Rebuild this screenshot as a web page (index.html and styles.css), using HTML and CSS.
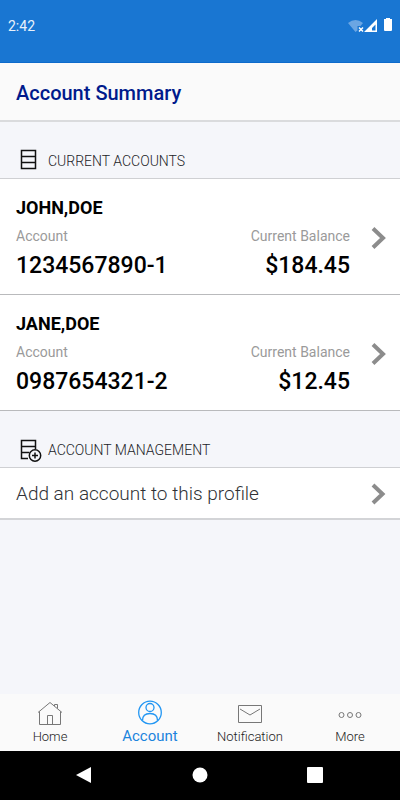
FILE: index.html
```html
<!DOCTYPE html>
<html lang="en">
<head>
<meta charset="utf-8">
<meta name="viewport" content="width=device-width, initial-scale=1">
<title>Account Summary</title>
<link rel="stylesheet" href="styles.css">
</head>
<body>
<div class="status">
  <span>2:42</span>
  <svg width="46" height="16" viewBox="0 0 46 16" aria-hidden="true">
    <path d="M-2 5Q5.500-1 13 5L10.500 8H7.500V12.500L5.500 14Z" fill="#6ba6e3"/>
    <path d="M9 9.500l4 4m0-4l-4 4" stroke="#fff" stroke-width="1.500"/>
    <path fill-rule="evenodd" d="M27 1V14H14ZM25.500 6.500L22 10V12.500H25.500Z" fill="#fff"/>
    <path d="M36 0h4v1h2v11q0 1-1 1h-6q-1 0-1-1V1h2z" fill="#fff"/>
  </svg>
</div>
<header class="header"><h1>Account Summary</h1></header>
<main class="main">
  <h2 class="section">
    <svg width="24" height="24" viewBox="0 0 24 24" aria-hidden="true"><path d="M3.500 1.500h14v18h-14zM3.500 7.500h14M3.500 13.500h14"/></svg>
    Current Accounts
  </h2>
  <a class="card" href="#john">
    <span class="details">
      <span class="name">JOHN,DOE</span>
      <span class="pair label"><span>Account</span><span>Current Balance</span></span>
      <span class="pair value"><span>1234567890-1</span><span>$184.45</span></span>
    </span>
    <svg class="chevron" width="16" height="22" viewBox="0 0 16 22" aria-hidden="true"><path d="M3 1.500L13 11L3 20.500"/></svg>
  </a>
  <a class="card" href="#jane">
    <span class="details">
      <span class="name">JANE,DOE</span>
      <span class="pair label"><span>Account</span><span>Current Balance</span></span>
      <span class="pair value"><span>0987654321-2</span><span>$12.45</span></span>
    </span>
    <svg class="chevron" width="16" height="22" viewBox="0 0 16 22" aria-hidden="true"><path d="M3 1.500L13 11L3 20.500"/></svg>
  </a>
  <h2 class="section">
    <svg width="24" height="24" viewBox="0 0 24 24" aria-hidden="true"><path d="M10 20.500H3.500v-18h14V11M3.500 8.500h14M3.500 14.500h8"/><circle cx="17" cy="17.500" r="5.700"/><path d="M17 14.500v6M14 17.500h6"/></svg>
    Account Management
  </h2>
  <a class="card add" href="#add">
    <span class="details">Add an account to this profile</span>
    <svg class="chevron" width="16" height="22" viewBox="0 0 16 22" aria-hidden="true"><path d="M3 2L12.500 11L3 20"/></svg>
  </a>
</main>
<nav class="tabs">
  <a href="#home"><svg width="26" height="26" viewBox="0 0 26 26" aria-hidden="true"><path d="M1 11.500L13 1.500L25 11.500M2.500 10.500v13h21v-13M10.500 23.500v-9h5v9M17.500 5V3.500h3V7.500"/></svg>Home</a>
  <a class="active" href="#account"><svg width="26" height="26" viewBox="0 0 26 26" aria-hidden="true"><circle cx="13" cy="12.500" r="11.300"/><circle cx="13" cy="7.500" r="4"/><path d="M5.500 20.500q0-7 7.500-7t7.500 7"/></svg>Account</a>
  <a href="#notification"><svg width="26" height="26" viewBox="0 0 26 26" aria-hidden="true"><path d="M1.500 4.500h23v17h-23zM3 8l10 6l10-6"/></svg>Notification</a>
  <a href="#more"><svg width="26" height="26" viewBox="0 0 26 26" aria-hidden="true"><circle cx="4.500" cy="14" r="2.500"/><circle cx="13" cy="14" r="2.500"/><circle cx="21.500" cy="14" r="2.500"/></svg>More</a>
</nav>
<div class="system">
  <button aria-label="Back"><svg width="18" height="18" viewBox="0 0 18 18"><path d="M0 9L15 1V17Z"/></svg></button>
  <button aria-label="Home screen"><svg width="18" height="18" viewBox="0 0 18 18"><circle cx="9" cy="9" r="7.500"/></svg></button>
  <button aria-label="Recent apps"><svg width="18" height="18" viewBox="0 0 18 18"><rect x="1" y="1" width="16" height="16" rx="1"/></svg></button>
</div>
</body>
</html>
```
FILE: styles.css
```css
* { box-sizing: border-box; }
body {
  margin: 0;
  min-height: 100vh;
  display: flex;
  flex-direction: column;
  background: #f5f6fa;
  font-family: Roboto, "Liberation Sans", sans-serif;
}
a { color: inherit; text-decoration: none; }
svg { flex: none; fill: none; }
.status {
  display: flex;
  justify-content: space-between;
  align-items: flex-start;
  padding: 18px 4px 28px 8px;
  background: #1976d2;
  border-bottom: 1px solid #0d6acb;
  color: #e8f1fb;
  font-size: 14px;
  line-height: 16px;
}
.status svg { overflow: visible; }
.header {
  padding: 17px 16px 14px;
  background: #fafafa;
  border-bottom: 2px solid #dadbdd;
}
h1 {
  margin: 0;
  color: #001a8c;
  font-size: 20px;
  font-weight: 500;
  line-height: 26px;
}
.main { flex: 1; }
.section {
  display: flex;
  align-items: center;
  gap: 6px;
  height: 57px;
  margin: 0;
  padding: 22px 18px 0;
  border-bottom: 1px solid #cfd0d3;
  color: #222327;
  font-size: 14px;
  font-weight: 300;
  text-transform: uppercase;
}
.section svg { stroke: #111; stroke-width: 1.5; }
.section circle { fill: #f5f6fa; }
.card {
  display: flex;
  align-items: center;
  gap: 20px;
  padding: 15px 14px 12px 16px;
  background: #fff;
  border-bottom: 1px solid #b9babc;
  color: #000;
}
.details {
  display: flex;
  flex: 1;
  flex-direction: column;
}
.name { font-size: 18px; font-weight: 700; line-height: 28px; }
.pair { display: flex; justify-content: space-between; }
.label { color: #9a9a9a; font-size: 14px; line-height: 28px; }
.value { font-size: 23px; font-weight: 500; line-height: 32px; }
.chevron { overflow: visible; stroke: #8c8c8c; stroke-width: 4; }
.add {
  padding-top: 13px;
  padding-bottom: 11px;
  border-bottom: 2px solid #d3d4d7;
  color: #303236;
  font-size: 19px;
  font-weight: 300;
  line-height: 26px;
}
.tabs {
  display: grid;
  grid-template-columns: repeat(4, 1fr);
  background: #fafafa;
}
.tabs a {
  display: flex;
  flex-direction: column;
  align-items: center;
  gap: 2px;
  padding: 7px 0 6px;
  color: #222;
  font-size: 13px;
  font-weight: 300;
  line-height: 16px;
}
.tabs svg { stroke: #777; stroke-width: 1; }
.tabs .active { padding-top: 6px; color: #1b84dd; font-size: 15px; font-weight: 400; }
.tabs .active svg { stroke: #2196f3; stroke-width: 1.3; }
.system {
  display: flex;
  justify-content: space-between;
  padding: 15px 76px 16px;
  background: #000;
}
.system button {
  display: flex;
  padding: 0;
  border: 0;
  background: none;
}
.system svg { fill: #fff; }
```
